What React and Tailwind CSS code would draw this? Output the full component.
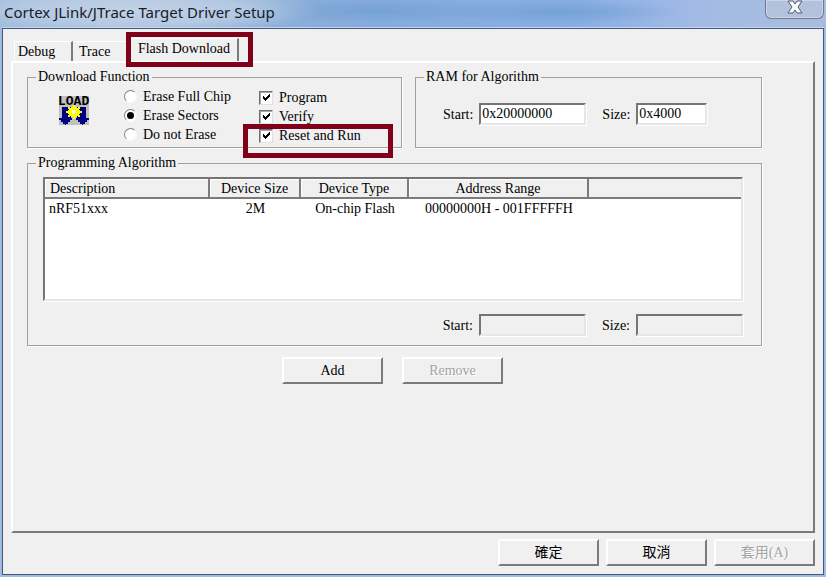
import React from "react";

const sunken =
  "border-2 border-t-[#757575] border-l-[#757575] border-r-[#e6e6e6] border-b-[#e6e6e6] shadow-[1px_1px_0_#fff]";

function Group({ title, className = "", children }) {
  return (
    <fieldset
      className={`min-w-0 border border-[#a0a0a0] shadow-[1px_1px_0_#fff] ${className}`}
    >
      <legend className="ml-2 px-0.5 leading-5">{title}</legend>
      {children}
    </fieldset>
  );
}

function RadioOption({ id, label, defaultChecked }) {
  return (
    <div className="flex h-[19px] items-center gap-1.5">
      <span className="grid place-items-center">
        <input
          id={id}
          type="radio"
          name="erase"
          defaultChecked={defaultChecked}
          className="peer size-[13px] appearance-none rounded-full border border-t-[#808080] border-l-[#808080] border-r-[#f8f8f8] border-b-[#f8f8f8] bg-white [grid-area:1/1]"
        />
        <span className="pointer-events-none invisible size-[7px] rounded-full bg-black [grid-area:1/1] peer-checked:visible" />
      </span>
      <label htmlFor={id}>{label}</label>
    </div>
  );
}

function CheckOption({ id, label }) {
  return (
    <div className="flex h-[19px] items-center gap-1.5">
      <span className="grid place-items-center">
        <input
          id={id}
          type="checkbox"
          defaultChecked
          className="peer size-3.5 appearance-none border border-t-[#707070] border-l-[#707070] border-r-[#e0e0e0] border-b-[#e0e0e0] bg-white shadow-[inset_1px_1px_0_#a8a8a8] [grid-area:1/1]"
        />
        <svg
          viewBox="0 0 7 7"
          className="pointer-events-none invisible size-[7px] [grid-area:1/1] peer-checked:visible"
          shapeRendering="crispEdges"
        >
          <path d="M0 2h1v1h1v1h1v-1h1v-1h1v-1h1v-1h1v3h-1v1h-1v1h-1v1h-1v1h-1v-1h-1v-1h-1z" />
        </svg>
      </span>
      <label htmlFor={id}>{label}</label>
    </div>
  );
}

function Field({ id, label, value, disabled, width }) {
  return (
    <div className="flex items-center gap-1.5">
      <label htmlFor={id} className="pt-0.5">
        {label}
      </label>
      <input
        id={id}
        type="text"
        defaultValue={value}
        disabled={disabled}
        className={`h-[22px] px-px ${sunken} ${width} ${disabled ? "bg-[#f0f0f0]" : "bg-white"}`}
      />
    </div>
  );
}

function PushButton({ children, disabled }) {
  return (
    <button
      type="button"
      disabled={disabled}
      className="h-[27px] w-[101px] border-2 border-t-white border-l-white border-r-[#7b7b7b] border-b-[#7b7b7b] bg-[#f0f0f0] text-center leading-5 disabled:text-[#a3a3a3] disabled:[text-shadow:1px_1px_0_#fff]"
    >
      {children}
    </button>
  );
}

function LoadIcon() {
  return (
    <svg viewBox="0 0 32 32" className="size-8" role="img" aria-label="Load">
      <rect x="1" y="1" width="30" height="29" fill="#c0c0c0" />
      <text
        x="0"
        y="10"
        fontSize="13"
        fontWeight="700"
        fontFamily="Liberation Mono, monospace"
      >
        LOAD
      </text>
      <g shapeRendering="crispEdges">
        <path
          fill="#000080"
          d="M4 12h9v11h1v2h-2v2h-2v2h-2v1h-1v-1h-2v-2h-2v-2h-2v-2h3zM19 12h9v11h3v2h-2v2h-2v2h-2v1h-1v-1h-2v-2h-2v-2h-2v-2h1z"
        />
        <path
          fill="#ffff00"
          d="M15 10h2v2h2v1h1v-1h2v2h-1v1h1v1h2v2h-2v1h-1v1h1v2h-2v-1h-1v1h-2v2h-2v-2h-2v-1h-1v1h-2v-2h1v-1h-1v-1h-2v-2h2v-1h1v-1h-1v-2h2v1h1v-1h2z"
        />
        <path fill="#ffffff" d="M14 15h3v4h-3z" />
      </g>
    </svg>
  );
}

const heading =
  "h-5 border-r-2 border-b-2 border-[#7b7b7b] bg-[#f0f0f0] p-0 pt-0.5 leading-4 font-normal shadow-[inset_1px_1px_0_#fff]";

export default function App() {
  return (
    <div className="flex min-h-screen flex-col bg-[#9fbbe0] font-['Liberation_Serif','Noto_Sans_CJK_TC',serif] text-[14px] leading-5 text-black">
      <header className="flex h-7 items-start justify-between bg-[radial-gradient(ellipse_190px_26px_at_130px_10px,#c3d2e4_0%,#b3c8e2_60%,transparent_100%),radial-gradient(ellipse_150px_12px_at_375px_11px,#76a3d3_0%,transparent_100%),radial-gradient(ellipse_120px_12px_at_560px_12px,#76a2d3_0%,transparent_100%),linear-gradient(90deg,#9db9da_0%,#86abdc_45%,#88aee6_70%,#a3bbe4_85%,#a9bcdc_100%)] pl-1">
        <h1 className="font-['Noto_Sans',sans-serif] text-[15px] leading-6 text-[#14202e]">
          Cortex JLink/JTrace Target Driver Setup
        </h1>
        <button
          type="button"
          aria-label="Close"
          className="mr-0.5 flex h-[19px] w-[59px] justify-center rounded-b-md border border-t-0 border-[#6d7c96] bg-[#b3c2dc] shadow-[inset_0_0_0_1px_#cbd6e8]"
        >
          <svg viewBox="0 0 16 14" className="h-3.5 w-4">
            <path
              d="M1 1h5l2 3 2-3h5l-4 6 4 6h-5l-2-3-2 3h-5l4-6z"
              fill="#f8fafc"
              stroke="#535c70"
              strokeLinejoin="round"
            />
          </svg>
        </button>
      </header>

      <main className="mr-0.5 mb-0.5 ml-0.5 flex flex-1 flex-col border border-[#43587a] bg-[#f0f0f0] px-2 pt-[9px] pb-2 shadow-[0_-1px_0_#c5d8f0]">
        <div role="tablist" className="flex items-end pl-[3px]">
          <button
            type="button"
            role="tab"
            aria-selected="false"
            className="h-5 w-[59px] border-t border-r-2 border-l border-t-white border-r-[#7b7b7b] border-l-white pl-[3px] text-left"
          >
            Debug
          </button>
          <button
            type="button"
            role="tab"
            aria-selected="false"
            className="h-5 w-[57px] border-t border-t-white pl-1.5 text-left"
          >
            Trace
          </button>
          <div className="relative">
            <button
              type="button"
              role="tab"
              aria-selected="true"
              className="block h-[23px] w-[109px] border-t border-r-2 border-l border-t-white border-r-[#7b7b7b] border-l-white pb-0.5 text-center"
            >
              Flash Download
            </button>
            <div className="pointer-events-none absolute -top-1.5 -left-1 h-[35px] w-[127px] border-5 border-[#80001a]" />
          </div>
        </div>

        <section
          role="tabpanel"
          className="flex-1 border-2 border-t-white border-r-[#7b7b7b] border-b-[#7b7b7b] border-l-white pt-1 pr-[51px] pl-3.5"
        >
          <div className="grid grid-cols-[375px_1fr] gap-[13px]">
            <Group title="Download Function" className="h-[81px]">
              <div className="flex">
                <div className="w-24 pt-2 pl-[30px]">
                  <LoadIcon />
                </div>
                <div className="w-[135px]">
                  <RadioOption id="full" label="Erase Full Chip" />
                  <RadioOption id="sectors" label="Erase Sectors" defaultChecked />
                  <RadioOption id="none" label="Do not Erase" />
                </div>
                <div className="relative pt-px">
                  <CheckOption id="program" label="Program" />
                  <CheckOption id="verify" label="Verify" />
                  <CheckOption id="run" label="Reset and Run" />
                  <div className="pointer-events-none absolute top-[37px] -left-4 h-[34px] w-[150px] border-5 border-[#80001a]" />
                </div>
              </div>
            </Group>
            <Group title="RAM for Algorithm" className="h-[81px]">
              <div className="flex gap-4 pt-4 pl-[27px]">
                <Field id="ramStart" label="Start:" value="0x20000000" width="w-[107px]" />
                <Field id="ramSize" label="Size:" value="0x4000" width="w-[71px]" />
              </div>
            </Group>
          </div>

          <Group title="Programming Algorithm" className="mt-[5px]">
            <div className="pt-1 pr-[18px] pb-[9px] pl-[15px]">
              <div className={`h-[124px] bg-white ${sunken}`}>
                <table className="w-full table-fixed border-separate border-spacing-0">
                  <colgroup>
                    <col className="w-[165px]" />
                    <col className="w-[91px]" />
                    <col className="w-[108px]" />
                    <col className="w-[180px]" />
                    <col />
                  </colgroup>
                  <thead>
                    <tr>
                      <th className={`${heading} pl-[5px] text-left`}>Description</th>
                      <th className={`${heading} text-center`}>Device Size</th>
                      <th className={`${heading} text-center`}>Device Type</th>
                      <th className={`${heading} text-center`}>Address Range</th>
                      <td className="border-b-2 border-[#7b7b7b] bg-[#f0f0f0]" />
                    </tr>
                  </thead>
                  <tbody>
                    <tr>
                      <td className="p-0 pl-1">nRF51xxx</td>
                      <td className="p-0 text-center">2M</td>
                      <td className="p-0 text-center">On-chip Flash</td>
                      <td className="p-0 text-center">00000000H - 001FFFFFH</td>
                      <td />
                    </tr>
                  </tbody>
                </table>
              </div>
              <div className="mt-[13px] flex justify-end gap-4">
                <Field id="algStart" label="Start:" disabled width="w-[107px]" />
                <Field id="algSize" label="Size:" disabled width="w-[107px]" />
              </div>
            </div>
          </Group>

          <div className="mt-[11px] flex justify-center gap-[19px] pr-1">
            <PushButton>Add</PushButton>
            <PushButton disabled>Remove</PushButton>
          </div>
        </section>

        <footer className="mt-1.5 flex justify-end gap-[7px]">
          <PushButton>確定</PushButton>
          <PushButton>取消</PushButton>
          <PushButton disabled>套用(A)</PushButton>
        </footer>
      </main>
    </div>
  );
}
